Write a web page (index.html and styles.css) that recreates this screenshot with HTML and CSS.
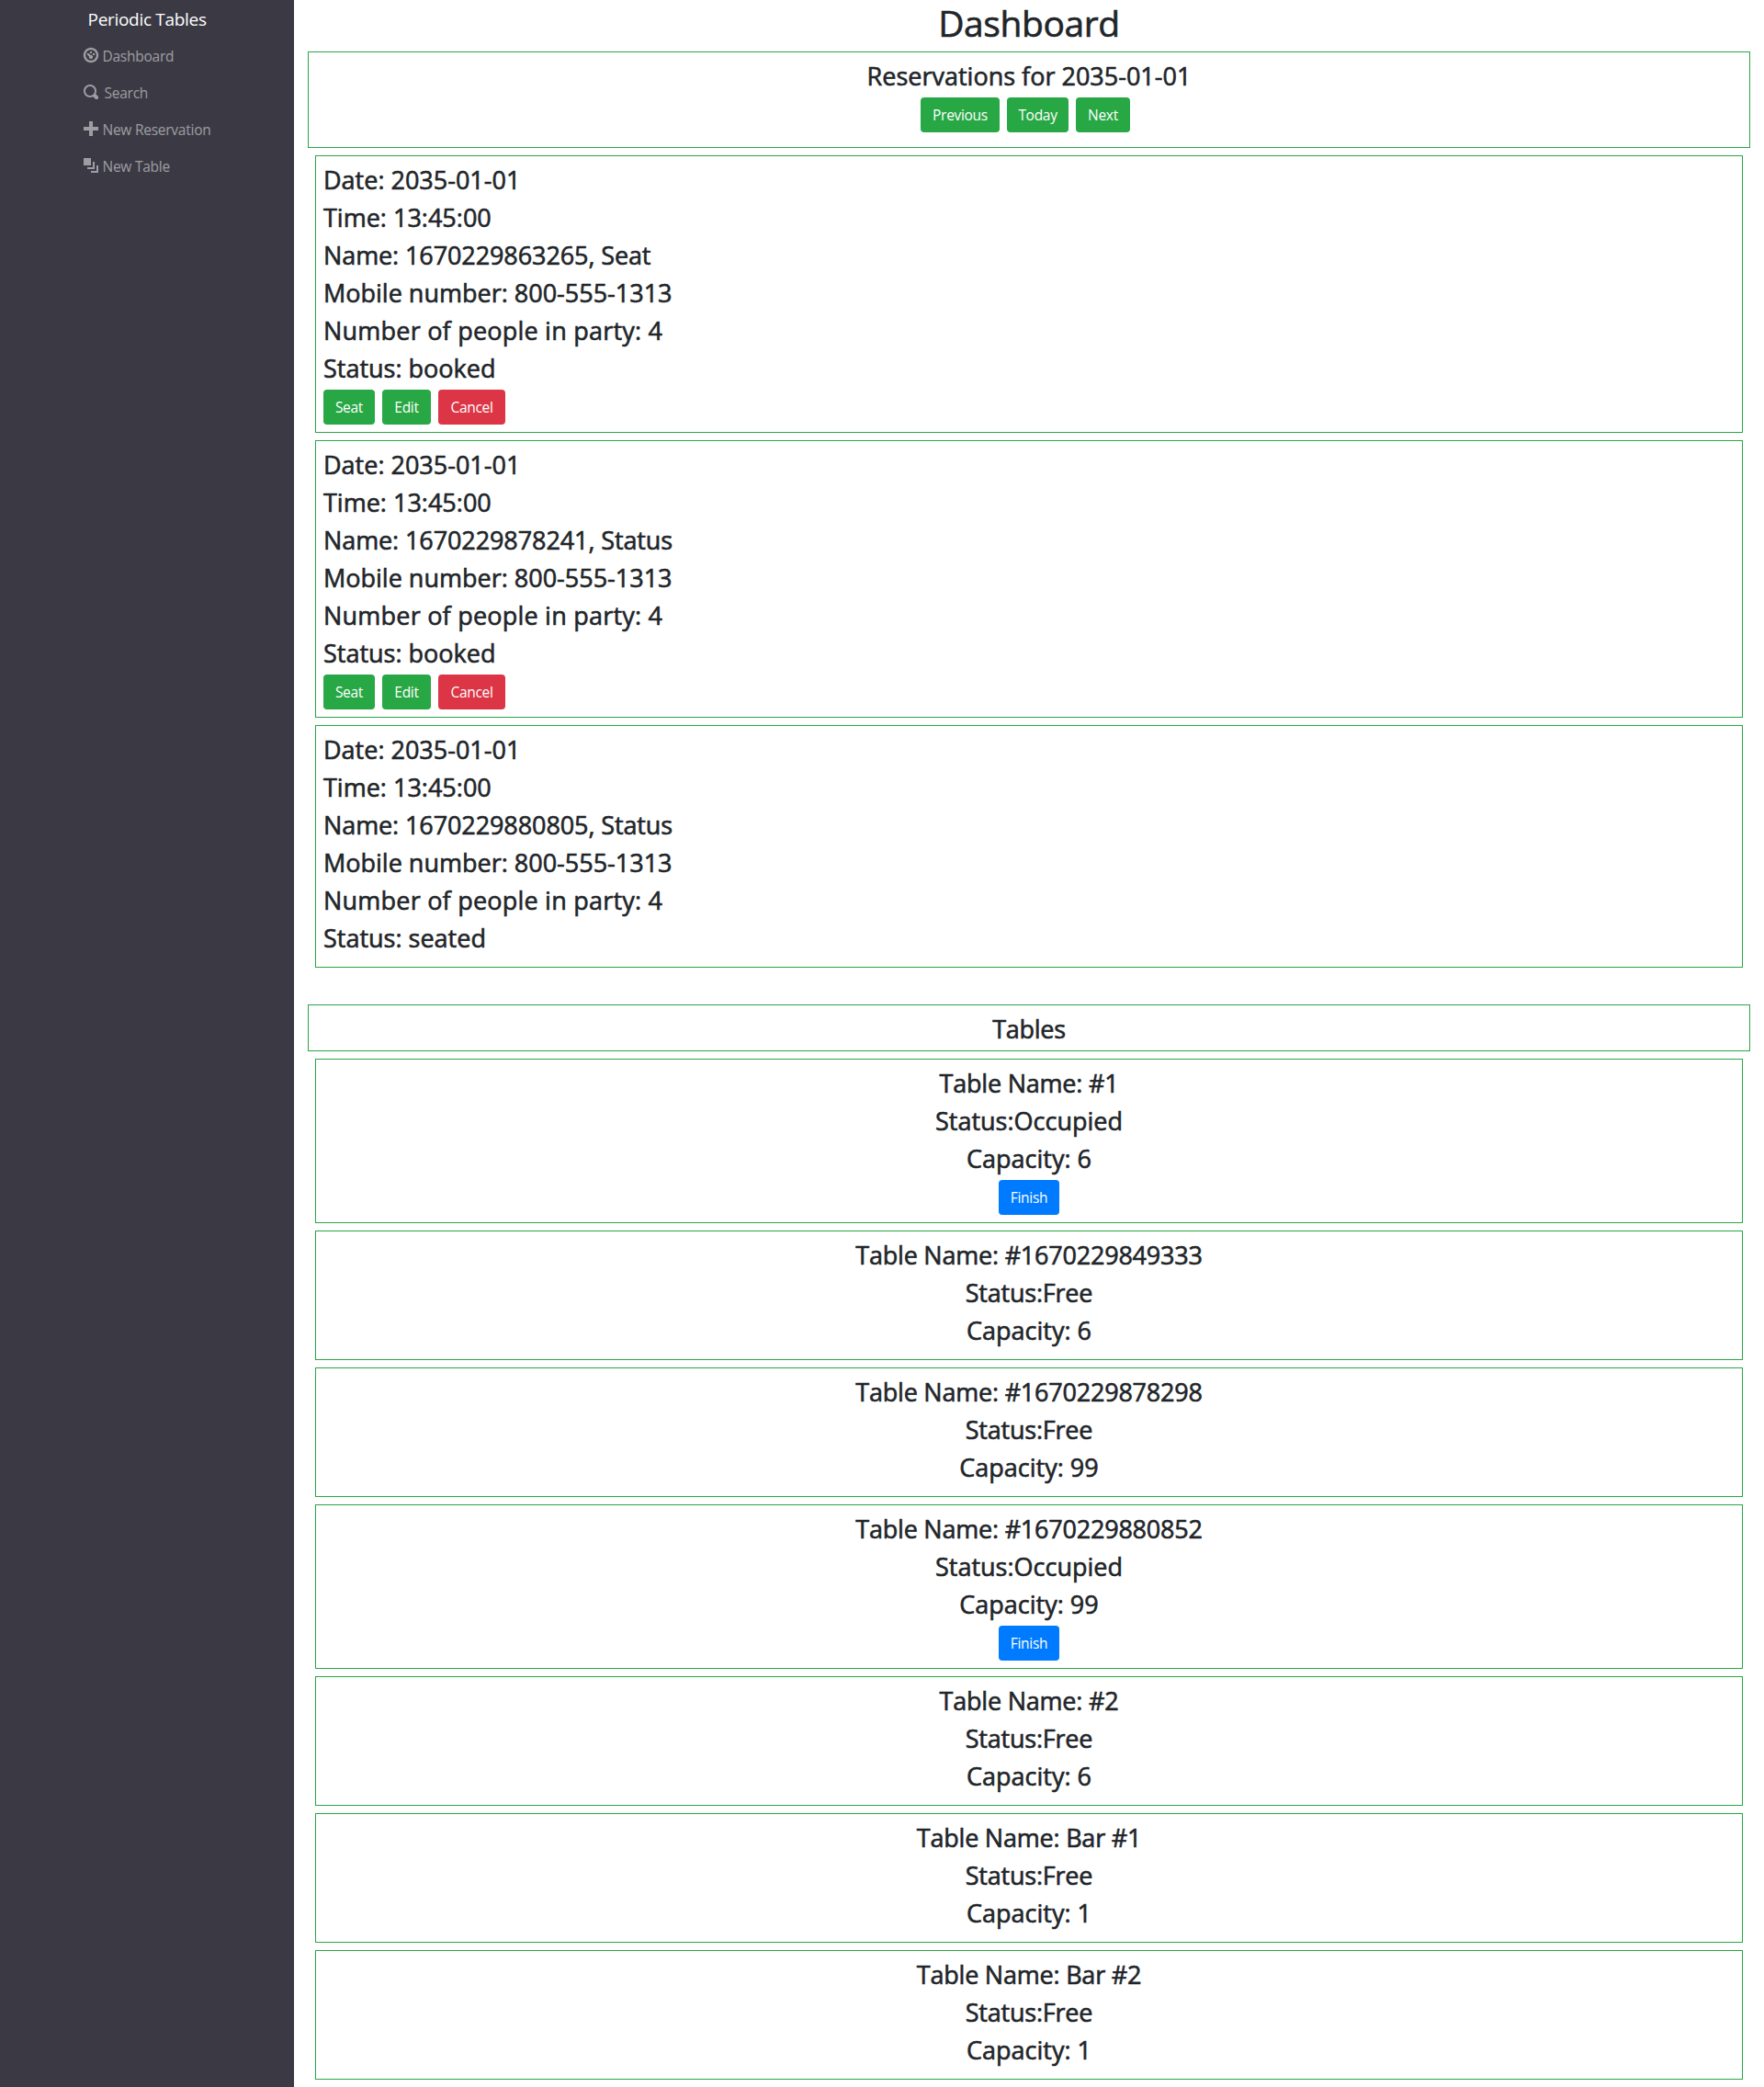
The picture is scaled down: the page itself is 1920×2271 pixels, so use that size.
FILE: index.html
```html
<!DOCTYPE html>
<html lang="en">
<head>
<meta charset="utf-8">
<title>Periodic Tables</title>
<link rel="stylesheet" href="styles.css">
</head>
<body>
<div class="layout">
  <nav class="sidebar">
    <div class="menu">
      <a class="brand">Periodic Tables</a>
      <a class="link"><svg class="icon dial" viewBox="0 0 8 8"><path d="M4 0c-2.2 0-4 1.8-4 4s1.8 4 4 4 4-1.8 4-4-1.8-4-4-4zm0 1c1.66 0 3 1.34 3 3s-1.34 3-3 3-3-1.34-3-3 1.34-3 3-3zm0 1c-.28 0-.5.22-.5.5s.22.5.5.5.5-.22.5-.5-.22-.5-.5-.5zm-1.66 1a.5.5 0 0 0-.19.84l.91.91c-.02.08-.06.16-.06.25 0 .55.45 1 1 1s1-.45 1-1-.45-1-1-1c-.09 0-.17.04-.25.06l-.91-.91a.5.5 0 0 0-.44-.16.5.5 0 0 0-.06 0zm3.16 0c-.28 0-.5.22-.5.5s.22.5.5.5.5-.22.5-.5-.22-.5-.5-.5z"/></svg><span>Dashboard</span></a>
      <a class="link search"><svg class="icon" viewBox="0 0 8 8"><path d="M3.5 0c-1.93 0-3.5 1.57-3.5 3.5s1.57 3.5 3.5 3.5c.59 0 1.17-.14 1.66-.41a1 1 0 0 0 .13.13l1 1a1.02 1.02 0 1 0 1.44-1.44l-1-1a1 1 0 0 0-.16-.13c.27-.49.44-1.06.44-1.66 0-1.93-1.55-3.5-3.5-3.5zm0 1c1.39 0 2.5 1.11 2.5 2.5 0 .66-.24 1.27-.66 1.72-.01.01-.02.02-.03.03a1 1 0 0 0-.13.13c-.44.4-1.04.63-1.69.63-1.39 0-2.5-1.11-2.5-2.5s1.11-2.5 2.5-2.5z"/></svg><span>Search</span></a>
      <a class="link"><svg class="icon" viewBox="0 0 8 8"><path d="M3 0v3h-3v2h3v3h2v-3h3v-2h-3v-3h-2z"/></svg><span>New Reservation</span></a>
      <a class="link"><svg class="icon" viewBox="0 0 8 8"><path d="M0 0v4h4v-4h-4zm5 2v3h-3v1h4v-4h-1zm2 2v3h-3v1h4v-4h-1z"/></svg><span>New Table</span></a>
    </div>
  </nav>
  <main class="main">
    <h1>Dashboard</h1>
    <section class="panel">
      <h3>Reservations for 2035-01-01</h3>
      <div class="actions date-nav"><button class="btn previous">Previous</button><button class="btn today">Today</button><button class="btn next">Next</button></div>
    </section>
    <div class="cards">
      <article class="card reservation">
        <h3>Date: 2035-01-01</h3><h3>Time: 13:45:00</h3><h3 class="name">Name: 1670229863265, Seat</h3><h3>Mobile number: 800-555-1313</h3><h3 class="party">Number of people in party: 4</h3><h3>Status: booked</h3>
        <div class="actions"><button class="btn seat">Seat</button><button class="btn edit">Edit</button><button class="btn danger">Cancel</button></div>
      </article>
      <article class="card reservation">
        <h3>Date: 2035-01-01</h3><h3>Time: 13:45:00</h3><h3 class="name">Name: 1670229878241, Status</h3><h3>Mobile number: 800-555-1313</h3><h3 class="party">Number of people in party: 4</h3><h3>Status: booked</h3>
        <div class="actions"><button class="btn seat">Seat</button><button class="btn edit">Edit</button><button class="btn danger">Cancel</button></div>
      </article>
      <article class="card reservation">
        <h3>Date: 2035-01-01</h3><h3>Time: 13:45:00</h3><h3 class="name">Name: 1670229880805, Status</h3><h3>Mobile number: 800-555-1313</h3><h3 class="party">Number of people in party: 4</h3><h3>Status: seated</h3>
      </article>
    </div>
    <section class="panel tables-title"><h3>Tables</h3></section>
    <div class="cards">
      <article class="card"><h3 class="table-name">Table Name: #1</h3><h3>Status:Occupied</h3><h3>Capacity: 6</h3><div class="actions"><button class="btn primary">Finish</button></div></article>
      <article class="card"><h3 class="table-name">Table Name: #1670229849333</h3><h3 class="free">Status:Free</h3><h3>Capacity: 6</h3></article>
      <article class="card"><h3 class="table-name">Table Name: #1670229878298</h3><h3 class="free">Status:Free</h3><h3>Capacity: 99</h3></article>
      <article class="card"><h3 class="table-name">Table Name: #1670229880852</h3><h3>Status:Occupied</h3><h3>Capacity: 99</h3><div class="actions"><button class="btn primary">Finish</button></div></article>
      <article class="card"><h3 class="table-name">Table Name: #2</h3><h3 class="free">Status:Free</h3><h3>Capacity: 6</h3></article>
      <article class="card"><h3 class="table-name">Table Name: Bar #1</h3><h3 class="free">Status:Free</h3><h3>Capacity: 1</h3></article>
      <article class="card"><h3 class="table-name">Table Name: Bar #2</h3><h3 class="free">Status:Free</h3><h3>Capacity: 1</h3></article>
    </div>
  </main>
</div>
</body>
</html>
```
FILE: styles.css
```css
* { box-sizing: border-box; }
body {
  margin: 0;
  background: #fff;
  color: #212529;
  font: 400 16px/24px "Open Sans", "Noto Sans", sans-serif;
}
.layout { display: flex; min-height: 2271px; }
.sidebar {
  width: 320px;
  flex: none;
  display: flex;
  justify-content: center;
  align-items: flex-start;
  background: #3b3a44;
}
.menu { display: flex; flex-direction: column; width: 139px; }
.brand { padding: 6px 0 4px 5px; color: #fff; font-size: 19px; line-height: 30px; letter-spacing: -0.3px; white-space: nowrap; }
.link { display: flex; align-items: center; height: 40px; gap: 5px; color: rgba(255, 255, 255, .5); font-size: 15.5px; letter-spacing: -0.25px; white-space: nowrap; }
.link span { padding-top: 2px; }
.search { gap: 7px; }
.icon { width: 16px; height: 16px; fill: currentColor; }
.dial { stroke: currentColor; stroke-width: .15; overflow: visible; }
.main { flex: 1; padding: 0 15px; text-align: center; }
h1, h3 { margin: 0 0 8px; font-weight: 500; white-space: nowrap; -webkit-text-stroke: 0.6px #212529; }
h1 { padding-top: 2px; font-size: 39px; line-height: 46px; letter-spacing: -0.4px; }
h3 { padding-top: 2px; font-size: 27px; line-height: 31px; letter-spacing: 0; }
.name { letter-spacing: -0.1px; }
.party { letter-spacing: 0.22px; }
.table-name, .free { letter-spacing: -0.22px; }
.panel { border: 1px solid #28a745; padding: 8px; }
.date-nav { margin-bottom: 8px; }
.cards { display: flex; flex-direction: column; gap: 8px; padding: 8px; }
.card { border: 1px solid #28a745; padding: 8px; }
.reservation { text-align: left; }
.reservation .actions { justify-content: flex-start; }
.tables-title { margin-top: 32px; }
.tables-title h3 { margin: 0; letter-spacing: -0.3px; }
.actions { display: flex; justify-content: center; gap: 8px; }
.date-nav { padding-right: 8px; }
.btn { width: 66px; height: 38px; padding: 0; border: 0; border-radius: 4px; background: #28a745; color: #fff; font: 400 15.5px/24px "Open Sans", "Noto Sans", sans-serif; letter-spacing: -0.3px; }
.previous { width: 86px; }
.today { width: 67px; }
.next { width: 59px; }
.seat { width: 56px; }
.edit { width: 53px; }
.danger { width: 73px; background: #dc3545; }
.primary { background: #007bff; }
```
